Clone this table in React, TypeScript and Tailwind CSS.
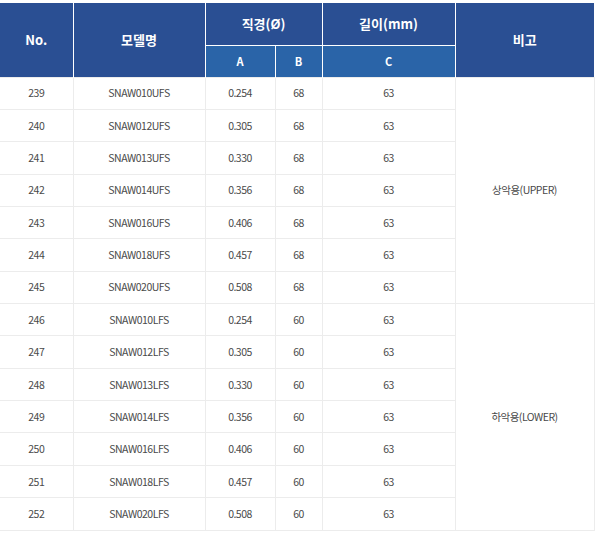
import React from "react";

const rows: [string, string, string, string, string][] = [
  ["239", "SNAW010UFS", "0.254", "68", "63"],
  ["240", "SNAW012UFS", "0.305", "68", "63"],
  ["241", "SNAW013UFS", "0.330", "68", "63"],
  ["242", "SNAW014UFS", "0.356", "68", "63"],
  ["243", "SNAW016UFS", "0.406", "68", "63"],
  ["244", "SNAW018UFS", "0.457", "68", "63"],
  ["245", "SNAW020UFS", "0.508", "68", "63"],
  ["246", "SNAW010LFS", "0.254", "60", "63"],
  ["247", "SNAW012LFS", "0.305", "60", "63"],
  ["248", "SNAW013LFS", "0.330", "60", "63"],
  ["249", "SNAW014LFS", "0.356", "60", "63"],
  ["250", "SNAW016LFS", "0.406", "60", "63"],
  ["251", "SNAW018LFS", "0.457", "60", "63"],
  ["252", "SNAW020LFS", "0.508", "60", "63"],
];

const td = "border border-[#ececec] text-center h-[32.36px] p-0";

export default function App() {
  return (
    <div
      className="w-[598px] h-[536px] bg-white pt-[3px]"
      style={{ fontFamily: '"Noto Sans CJK KR", "Noto Sans", sans-serif' }}
    >
      <table className="w-[594px] border-collapse table-fixed text-[10.5px] tracking-[-0.5px] text-[#4a4a4a]">
        <colgroup>
          <col className="w-[73px]" />
          <col className="w-[132px]" />
          <col className="w-[70px]" />
          <col className="w-[47px]" />
          <col className="w-[133px]" />
          <col className="w-[139px]" />
        </colgroup>
        <thead className="tracking-normal">
          <tr className="h-[42px]">
            <th rowSpan={2} className="bg-[#2a4f93] text-white text-[13px] font-bold border-r border-white">No.</th>
            <th rowSpan={2} className="bg-[#2a4f93] text-white text-[13px] font-bold border-r border-white">모델명</th>
            <th colSpan={2} className="bg-[#2a4f93] text-white text-[13px] font-bold border-r border-b border-white">직경(Ø)</th>
            <th className="bg-[#2a4f93] text-white text-[13px] font-bold border-r border-b border-white">길이(mm)</th>
            <th rowSpan={2} className="bg-[#2a4f93] text-white text-[13px] font-bold">비고</th>
          </tr>
          <tr className="h-[32px]">
            <th className="bg-[#2a64a8] text-white text-[11px] font-bold border-r border-white">A</th>
            <th className="bg-[#2a64a8] text-white text-[11px] font-bold border-r border-white">B</th>
            <th className="bg-[#2a64a8] text-white text-[11px] font-bold border-r border-white">C</th>
          </tr>
        </thead>
        <tbody>
          {rows.map((r, i) => (
            <tr key={r[0]}>
              <td className={td + " border-l-0"}>{r[0]}</td>
              <td className={td}>{r[1]}</td>
              <td className={td}>{r[2]}</td>
              <td className={td}>{r[3]}</td>
              <td className={td}>{r[4]}</td>
              {i === 0 && (
                <td rowSpan={7} className="border border-[#ececec] text-center p-0">상악용(UPPER)</td>
              )}
              {i === 7 && (
                <td rowSpan={7} className="border border-[#ececec] text-center p-0">하악용(LOWER)</td>
              )}
            </tr>
          ))}
        </tbody>
      </table>
    </div>
  );
}
